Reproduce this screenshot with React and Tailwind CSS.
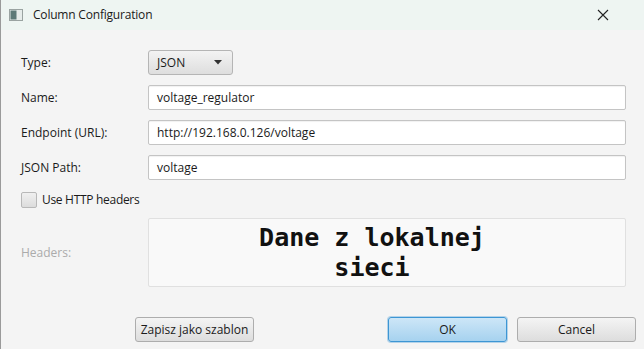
import React from "react";

const font = { fontFamily: '"Open Sans", "Noto Sans", sans-serif' };

const Field = ({ value }) => (
  <div className="h-[25px] flex-1 flex items-center px-[8px] bg-white border border-[#c4c4c4] rounded-[2px] text-[12px] text-[#1a1a1a] shadow-[inset_0_1px_1px_rgba(0,0,0,0.06)]">
    {value}
  </div>
);

const Row = ({ label, children, className = "", labelClass = "text-[#1a1a1a]" }) => (
  <div className={`flex items-center ${className}`}>
    <div className={`w-[127px] text-[12px] ${labelClass}`}>{label}</div>
    {children}
  </div>
);

export default function App() {
  return (
    <div className="w-[644px] h-[349px] flex flex-col bg-[#f4f4f4] border-l border-[#9a9a9a] overflow-hidden" style={font}>
      <div className="h-[30px] flex items-center bg-[#eef5f2] shrink-0">
        <svg width="14" height="12" viewBox="0 0 14 12" className="ml-[8px] mr-[10px]">
          <rect x="0.5" y="0.5" width="13" height="11" fill="#e6ecea" stroke="#9aa3a1" />
          <rect x="1.5" y="1.5" width="6" height="9" fill="#5d7a78" />
        </svg>
        <span className="text-[12px] text-[#1a1a1a] tracking-[-0.2px]">Column Configuration</span>
        <svg width="12" height="12" viewBox="0 0 12 12" className="ml-auto mr-[35px]">
          <path d="M1 1L11 11M11 1L1 11" stroke="#222" strokeWidth="1.1" />
        </svg>
      </div>

      <div className="flex-1 flex flex-col pl-[20px] pr-[18px] pt-[20px]">
        <Row label="Type:">
          <div className="h-[25px] w-[85px] flex items-center justify-between px-[8px] rounded-[3px] border border-[#b5b5b5] bg-gradient-to-b from-[#f3f3f3] to-[#dedede] text-[12px] text-[#1a1a1a]">
            <span>JSON</span>
            <svg width="8" height="5" viewBox="0 0 8 5" className="mr-[2px]">
              <path d="M0 0H8L4 4.5Z" fill="#333" />
            </svg>
          </div>
        </Row>
        <Row label="Name:" className="mt-[10px]">
          <Field value="voltage_regulator" />
        </Row>
        <Row label="Endpoint (URL):" className="mt-[10px]">
          <Field value="http://192.168.0.126/voltage" />
        </Row>
        <Row label="JSON Path:" className="mt-[10px]">
          <Field value="voltage" />
        </Row>
        <div className="flex items-center mt-[12px] h-[16px]">
          <div className="w-[16px] h-[16px] rounded-[2px] border border-[#b8b8b8] bg-gradient-to-b from-[#f0f0f0] to-[#dcdcdc]" />
          <span className="ml-[5px] text-[12px] text-[#1a1a1a] tracking-[-0.3px]">Use HTTP headers</span>
        </div>
        <Row label="Headers:" className="mt-[10px]" labelClass="text-[#ababab]">
          <div className="h-[69px] flex-1 flex items-center justify-center pr-[30px] bg-[#f9f9f9] border border-[#e0e0e0] rounded-[2px]">
            <div
              className="text-center text-[25px] font-bold leading-[30px] text-[#111]"
              style={{ fontFamily: '"DejaVu Sans Mono", "Liberation Mono", monospace' }}
            >
              Dane z lokalnej
              <br />
              sieci
            </div>
          </div>
        </Row>

        <div className="flex items-center mt-[30px] mr-[-10px]">
          <button className="ml-[114px] h-[25px] w-[119px] rounded-[3px] border border-[#adadad] bg-gradient-to-b from-[#f4f4f4] to-[#dddddd] text-[12px] text-[#1a1a1a]">
            Zapisz jako szablon
          </button>
          <button className="ml-auto h-[25px] w-[119px] rounded-[3px] border border-[#3d96d4] bg-gradient-to-b from-[#cde6f7] to-[#a6d2ef] text-[12px] text-[#1a1a1a] shadow-[0_0_0_1px_rgba(61,150,212,0.35)]">
            OK
          </button>
          <button className="ml-[10px] h-[25px] w-[119px] rounded-[3px] border border-[#adadad] bg-gradient-to-b from-[#f4f4f4] to-[#dddddd] text-[12px] text-[#1a1a1a]">
            Cancel
          </button>
        </div>
      </div>
    </div>
  );
}
